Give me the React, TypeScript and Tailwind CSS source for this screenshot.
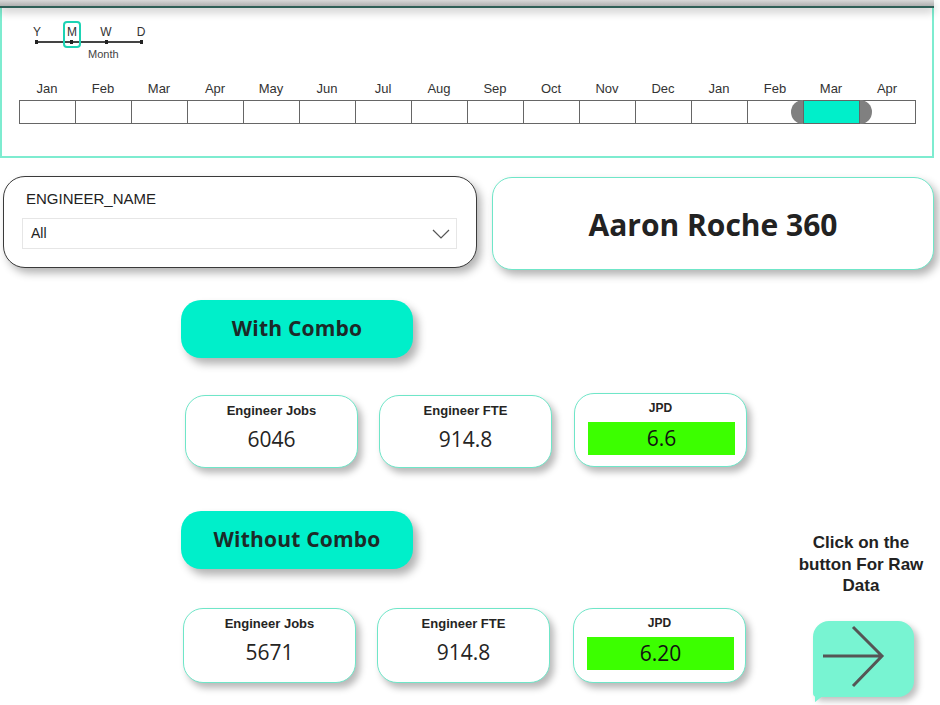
import React from "react";

const months = ["Jan","Feb","Mar","Apr","May","Jun","Jul","Aug","Sep","Oct","Nov","Dec","Jan","Feb","Mar","Apr"];

function MetricCard({ label, value, className }: { label: string; value: string; className?: string }) {
  return (
    <div className={"w-[173px] h-[73px] rounded-[20px] border border-[#6fe6c8] bg-white shadow-[4px_5px_7px_rgba(0,0,0,0.28)] flex flex-col items-center " + (className ?? "")}>
      <div className="mt-[7px] text-[13px] font-bold text-[#252423] leading-[16px] font-['Liberation_Sans',Arial,sans-serif]">{label}</div>
      <div className="mt-[8px] text-[21px] text-[#252423] leading-[24px] font-['Open_Sans',sans-serif]">{value}</div>
    </div>
  );
}

function JpdCard({ value, className }: { value: string; className?: string }) {
  return (
    <div className={"w-[173px] h-[74px] rounded-[20px] border border-[#6fe6c8] bg-white shadow-[4px_5px_7px_rgba(0,0,0,0.28)] flex flex-col " + (className ?? "")}>
      <div className="mt-[7px] text-center text-[12px] font-bold text-[#252423] leading-[14px] font-['Liberation_Sans',Arial,sans-serif]">JPD</div>
      <div className="mt-[7px] ml-[13px] w-[147px] h-[33px] bg-[#3cff00] flex items-center justify-center text-[21px] text-[#111] font-['Open_Sans',sans-serif]">{value}</div>
    </div>
  );
}

function ComboButton({ text, className }: { text: string; className?: string }) {
  return (
    <div className={"w-[232px] h-[58px] rounded-[20px] bg-[#00efca] shadow-[5px_6px_8px_rgba(0,0,0,0.3)] flex items-center justify-center " + (className ?? "")}>
      <span className="text-[21px] font-bold text-[#1c2a28] font-['Open_Sans',sans-serif] tracking-[0.2px]">{text}</span>
    </div>
  );
}

export default function App() {
  return (
    <div className="w-[940px] h-[705px] bg-white overflow-hidden font-['Liberation_Sans',Arial,sans-serif]">
      {/* top strip */}
      <div className="relative z-10 w-[934px] h-[8px] bg-gradient-to-b from-[#d8d8d8] to-[#b0b0b0] border-b-2 border-[#2f5f57] shadow-[0_4px_10px_rgba(0,0,0,0.22)]" />
      {/* timeline panel */}
      <div className="w-[934px] h-[150px] border-2 border-t-0 border-[#7eecd0] bg-white pt-[17px]">
        <div className="relative ml-[27px] w-[124px] h-[40px]">
          <div className="flex w-[124px] text-[12px] text-[#333] leading-[14px]">
            <span className="w-[16px] text-center">Y</span>
            <span className="w-[16px] ml-[19px] text-center">M</span>
            <span className="w-[16px] ml-[18px] text-center">W</span>
            <span className="w-[16px] ml-[19px] text-center">D</span>
          </div>
          <div className="absolute left-[7px] top-[16px] w-[106px] h-[2px] bg-[#444]" />
          <div className="absolute left-[6px] top-[15px] w-[3px] h-[4px] bg-[#222]" />
          <div className="absolute left-[41px] top-[15px] w-[3px] h-[4px] bg-[#222]" />
          <div className="absolute left-[76px] top-[15px] w-[3px] h-[4px] bg-[#222]" />
          <div className="absolute left-[111px] top-[15px] w-[3px] h-[4px] bg-[#222]" />
          <div className="absolute left-[34px] top-[-4px] w-[18px] h-[27px] rounded-[4px] border-2 border-[#1dd3b4]" />
          <div className="absolute left-[59px] top-[22px] text-[11px] text-[#444] leading-[14px]">Month</div>
        </div>
        <div className="ml-[17px] mt-[16px]">
          <div className="flex">
            {months.map((m, i) => (
              <div key={i} className="w-[56px] text-center text-[13px] text-[#333] leading-[16px]">{m}</div>
            ))}
          </div>
          <div className="flex mt-[3px] border-l border-[#666] w-[897px]">
            {months.map((m, i) => (
              <div
                key={i}
                className={"relative w-[56px] h-[24px] border-y border-r border-[#666] " + (i === 14 ? "bg-[#00efca]" : "bg-white")}
              >
                {i === 14 && (
                  <>
                    <div className="absolute z-10 left-[-13px] top-[-1px] w-[12px] h-[24px] rounded-l-full bg-[#808080]" />
                    <div className="absolute z-10 right-[-13px] top-[-1px] w-[12px] h-[24px] rounded-r-full bg-[#808080]" />
                  </>
                )}
              </div>
            ))}
          </div>
        </div>
      </div>

      {/* slicer + name */}
      <div className="flex mt-[18px]">
        <div className="ml-[3px] w-[474px] h-[92px] rounded-[22px] border border-[#3a3a3a] bg-white shadow-[4px_5px_8px_rgba(0,0,0,0.3)] flex flex-col">
          <div className="ml-[22px] mt-[13px] text-[15px] text-[#222] leading-[18px]">ENGINEER_NAME</div>
          <div className="ml-[18px] mt-[10px] w-[435px] h-[31px] border border-[#e6e6e6] flex items-center justify-between pl-[8px] pr-[6px]">
            <span className="text-[14px] text-[#222]">All</span>
            <svg width="18" height="10" viewBox="0 0 18 10"><path d="M1 1 L9 9 L17 1" fill="none" stroke="#555" strokeWidth="1.2" /></svg>
          </div>
        </div>
        <div className="ml-[15px] mt-[1px] w-[442px] h-[93px] rounded-[20px] border border-[#6fe6c8] bg-white shadow-[4px_5px_8px_rgba(0,0,0,0.3)] flex items-center justify-center">
          <span className="text-[30px] font-bold text-[#222] font-['Open_Sans',sans-serif] mt-[1px]">Aaron Roche 360</span>
        </div>
      </div>

      {/* lower area */}
      <div className="flex">
        <div className="ml-[181px] w-[600px] flex flex-col">
          <ComboButton text="With Combo" className="mt-[30px]" />
          <div className="flex items-start mt-[35px]">
            <MetricCard label="Engineer Jobs" value="6046" className="ml-[4px] mt-[2px]" />
            <MetricCard label="Engineer FTE" value="914.8" className="ml-[21px] mt-[2px]" />
            <JpdCard value="6.6" className="ml-[22px]" />
          </div>
          <ComboButton text="Without Combo" className="mt-[43px]" />
          <div className="flex items-start mt-[39px]">
            <MetricCard label="Engineer Jobs" value="5671" className="ml-[2px] h-[75px]" />
            <MetricCard label="Engineer FTE" value="914.8" className="ml-[21px] h-[75px]" />
            <JpdCard value="6.20" className="ml-[23px] h-[75px]" />
          </div>
        </div>
        <div className="ml-[14px] w-[132px] flex flex-col items-center">
          <div className="mt-[262px] text-center text-[17px] font-bold text-[#222] leading-[21.5px]">
            Click on the<br />button For Raw<br />Data
          </div>
          <div className="relative mt-[24px] ml-[4px] w-[101px] h-[76px] rounded-[16px] rounded-bl-[4px] bg-[#78f4d2] shadow-[4px_4px_6px_rgba(0,0,0,0.25)]">
            <div className="absolute left-[2px] bottom-[-6px] w-[10px] h-[8px] bg-[#78f4d2] [clip-path:polygon(0_0,100%_0,0_100%)]" />
            <svg className="absolute left-0 top-0" width="101" height="76" viewBox="0 0 101 76">
              <path d="M10 35 L69 35 M40 6 L69 35 L40 65" fill="none" stroke="#555" strokeWidth="3" strokeLinecap="butt" />
            </svg>
          </div>
        </div>
      </div>
    </div>
  );
}
